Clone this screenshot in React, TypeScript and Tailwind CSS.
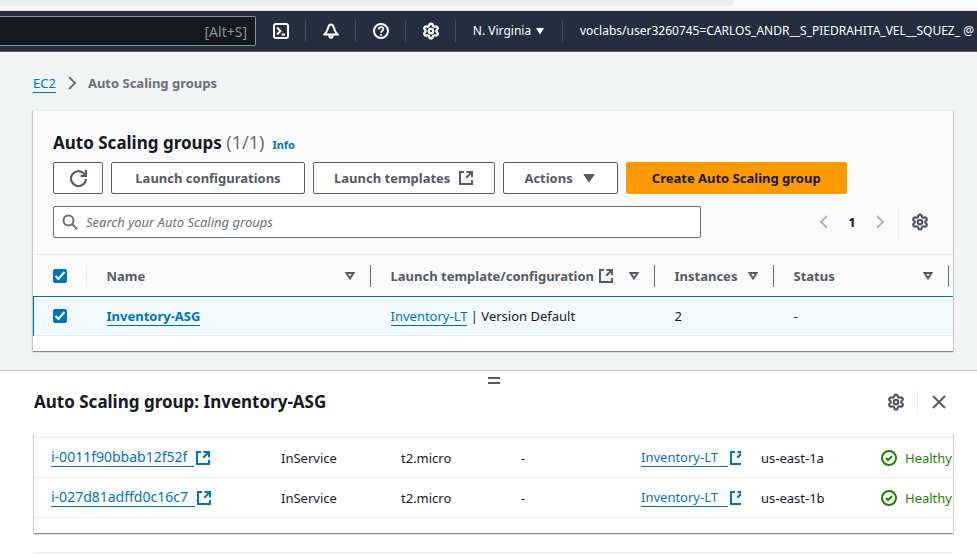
import type { ReactNode } from "react";
import { Settings } from "lucide-react";

function ExternalIcon() {
  return (
    <svg viewBox="0 0 16 16" className="inline-block size-4 shrink-0" fill="none" stroke="currentColor" strokeWidth="2" aria-hidden="true">
      <path d="M6 2H2v12h12v-4" />
      <path d="M8.5 2H14v5.2M14 2 8.2 7.8" />
    </svg>
  );
}

function CaretDown({ open = false }: { open?: boolean }) {
  return (
    <svg viewBox="0 0 16 16" className="size-4 shrink-0" fill={open ? "none" : "currentColor"} stroke="currentColor" strokeWidth="2" aria-hidden="true">
      {open ? <path d="M4.5 5h7L8 10.5z" /> : <path d="M4 5h8l-4 6z" />}
    </svg>
  );
}

function Angle({ left = false }: { left?: boolean }) {
  return (
    <svg viewBox="0 0 16 16" className="size-4" fill="none" stroke="currentColor" strokeWidth="2" aria-hidden="true">
      <path d={left ? "M11 2 5 8l6 6" : "M5 2l6 6-6 6"} />
    </svg>
  );
}

function CheckCircle() {
  return (
    <svg viewBox="0 0 16 16" className="size-4 shrink-0" fill="none" stroke="currentColor" strokeWidth="2" aria-hidden="true">
      <circle cx="8" cy="8" r="7" />
      <path d="m5 8 2 2 4-4" />
    </svg>
  );
}

function NavIcon({ label, children }: { label: string; children: ReactNode }) {
  return (
    <button type="button" aria-label={label} className="flex h-[22px] w-[50px] shrink-0 items-center justify-center border-r border-[#414d5c]">
      <svg viewBox="0 0 16 16" className="size-4" fill="none" stroke="currentColor" strokeWidth="2" aria-hidden="true">
        {children}
      </svg>
    </button>
  );
}

function Checkbox({ label }: { label: string }) {
  return (
    <span className="relative block size-[14px]">
      <input
        type="checkbox"
        defaultChecked
        aria-label={label}
        className="peer block size-[14px] appearance-none rounded-xs border border-[#687078] checked:border-[#0073bb] checked:bg-[#0073bb]"
      />
      <svg viewBox="0 0 14 14" className="pointer-events-none absolute inset-0 hidden size-[14px] peer-checked:block" fill="none" stroke="#fff" strokeWidth="2" aria-hidden="true">
        <path d="m2.5 7 3 3 6-7" />
      </svg>
    </span>
  );
}

const link = "border-b border-[#0073bb] text-[#0073bb]";
const panelShadow =
  "shadow-[0_1px_1px_0_rgba(0,28,36,0.3),1px_1px_1px_0_rgba(0,28,36,0.15),-1px_1px_1px_0_rgba(0,28,36,0.15)]";
const button =
  "flex h-8 items-center justify-center rounded-xs border border-[#545b64] bg-white px-5 font-bold whitespace-nowrap text-[#545b64]";

function HeaderCell({ label, external = false }: { label: string; external?: boolean }) {
  return (
    <th className="p-0 text-left font-bold">
      <div className="flex h-[22px] items-center justify-between border-r border-[#687078] pr-3 pl-5">
        <span className="flex items-center gap-1 whitespace-nowrap">
          {label}
          {external && <ExternalIcon />}
        </span>
        <CaretDown open />
      </div>
    </th>
  );
}

const instances = [
  { id: "i-0011f90bbab12f52f", zone: "us-east-1a" },
  { id: "i-027d81adffd0c16c7", zone: "us-east-1b" },
];

export default function App() {
  return (
    <div className="flex min-h-screen flex-col overflow-hidden bg-white font-['Noto_Sans','Open_Sans',sans-serif] text-[13px] leading-5 text-[#16191f]">
      <div className="h-[11px] border-b border-[#d9dcdd] bg-[#fbfbfb]">
        <div className="h-[6px] w-3/4 rounded-br-sm bg-[#ededed]" />
      </div>

      <header className="flex h-[41px] items-center overflow-hidden border-b border-[#545b64] bg-[#232f3e] text-xs text-white">
        <input
          type="text"
          aria-label="Search"
          placeholder="[Alt+S]"
          className="h-[30px] w-64 shrink-0 rounded-r-xs border border-l-0 border-[#879596] bg-[#16191f] px-2 text-right text-sm placeholder:text-[#879596]"
        />
        <NavIcon label="CloudShell">
          <rect x="1" y="1" width="14" height="14" rx="2" />
          <path d="m4 4.5 3.5 3.5L4 11.5M8.5 11.5H12" />
        </NavIcon>
        <NavIcon label="Notifications">
          <path d="M8 1.5C6.500 1.500 5.500 3 5 5c-.6 2.500-1.500 4.500-3.500 6.500h13C12.500 9.500 11.600 7.500 11 5c-.5-2-1.500-3.500-3-3.500z" />
          <path d="M6.300 12c0 3.700 3.400 3.700 3.400 0" />
        </NavIcon>
        <NavIcon label="Help">
          <circle cx="8" cy="8" r="7" />
          <path d="M5.700 6.500c0-3.200 4.700-3 4.700-.2C10.400 7.800 8 7.700 8 9.700M8 11v1.800" strokeWidth="1.700" />
        </NavIcon>
        <button type="button" aria-label="Settings" className="flex h-[22px] w-[50px] shrink-0 items-center justify-center border-r border-[#414d5c]">
          <Settings size={18} strokeWidth={3} />
        </button>
        <button type="button" className="flex h-[22px] w-[107px] shrink-0 items-center justify-center gap-1 border-r border-[#414d5c] whitespace-nowrap">
          N. Virginia
          <svg viewBox="0 0 10 10" className="size-[10px]" fill="currentColor" aria-hidden="true">
            <path d="M1 2h8L5 8.500z" />
          </svg>
        </button>
        <button type="button" className="shrink-0 px-[17px] whitespace-nowrap">
          voclabs/user3260745=CARLOS_ANDR__S_PIEDRAHITA_VEL__SQUEZ_ @
        </button>
      </header>

      <main className="border-b border-[#c1c7c7] bg-[#f2f3f3] pt-[21px] pr-6 pb-[19px] pl-[33px]">
        <nav aria-label="Breadcrumb" className="flex h-5 items-center gap-2">
          <a href="#ec2" className="leading-4 text-[#0073bb]">
            <span className={link}>EC2</span>
          </a>
          <span className="text-[#687078]">
            <Angle />
          </span>
          <span className="font-bold text-[#687078]">Auto Scaling groups</span>
        </nav>

        <section className={`mt-[17px] border-t border-[#eaeded] bg-white ${panelShadow}`}>
          <div className="bg-[#fafafa] px-5 pt-5 pb-4">
            <div className="flex h-[22px] items-baseline gap-2">
              <h1 className="text-[17px] leading-[22px] font-bold whitespace-nowrap">
                Auto Scaling groups <span className="text-lg leading-[22px] font-normal text-[#687078]">(1/1)</span>
              </h1>
              <a href="#info" className="text-[11px] leading-4 font-bold text-[#0073bb]">
                Info
              </a>
            </div>
            <div className="mt-[9px] flex flex-wrap gap-2">
              <button type="button" aria-label="Refresh" className="flex h-8 w-[50px] items-center justify-center rounded-xs border border-[#545b64] bg-white text-[#545b64]">
                <svg viewBox="0 0 16 16" className="size-[17px]" fill="none" stroke="currentColor" strokeWidth="2" aria-hidden="true">
                  <path d="M15 8.500A7 7 0 1 1 13 3.200l1.500 1.800" />
                  <path d="M15 0v5.500h-5" />
                </svg>
              </button>
              <button type="button" className={`${button} min-w-[194px]`}>Launch configurations</button>
              <button type="button" className={`${button} gap-2`}>
                Launch templates
                <ExternalIcon />
              </button>
              <button type="button" className={`${button} gap-2`}>
                Actions
                <CaretDown />
              </button>
              <button type="button" className="h-8 min-w-[221px] rounded-xs border border-[#ff9900] bg-[#ff9900] px-5 font-bold whitespace-nowrap">
                Create Auto Scaling group
              </button>
            </div>
            <div className="mt-3 flex items-center justify-between pr-1">
              <div className="flex h-8 w-[648px] items-center rounded-xs border border-[#687078] bg-white px-2 text-[#687078]">
                <svg viewBox="0 0 16 16" className="size-4 shrink-0" fill="none" stroke="currentColor" strokeWidth="2" aria-hidden="true">
                  <circle cx="6.500" cy="6.500" r="5" />
                  <path d="m10 10 5 5" />
                </svg>
                <input
                  type="search"
                  aria-label="Search your Auto Scaling groups"
                  placeholder="Search your Auto Scaling groups"
                  className="ml-2 min-w-0 flex-1 placeholder:text-[#687078] placeholder:italic"
                />
              </div>
              <div className="flex items-center">
                <button type="button" aria-label="Previous page" className="text-[#aab7b8]"><Angle left /></button>
                <button type="button" className="w-10 text-center font-bold">1</button>
                <button type="button" aria-label="Next page" className="text-[#aab7b8]"><Angle /></button>
                <button type="button" aria-label="Preferences" className="ml-[10px] flex h-8 items-center border-l border-[#eaeded] pl-3 text-[#545b64]">
                  <Settings size={18} strokeWidth={3} />
                </button>
              </div>
            </div>
          </div>

          <div className="overflow-hidden pb-[15px]">
            <table className="w-full table-fixed border-collapse">
              <colgroup>
                <col className="w-[53px]" />
                <col className="w-[284px]" />
                <col className="w-[284px]" />
                <col className="w-[119px]" />
                <col className="w-[175px]" />
                <col />
              </colgroup>
              <thead>
                <tr className="h-[42px] border-t border-[#eaeded] bg-[#fafafa] text-[#545b64]">
                  <th className="p-0">
                    <div className="flex h-[22px] items-center border-r border-[#eaeded] pl-[19px]">
                      <Checkbox label="Select all" />
                    </div>
                  </th>
                  <HeaderCell label="Name" />
                  <HeaderCell label="Launch template/configuration" external />
                  <HeaderCell label="Instances" />
                  <HeaderCell label="Status" />
                  <td />
                </tr>
              </thead>
              <tbody>
                <tr className="h-[39px] border-t border-b border-t-[#0073bb] border-b-[#e3eaee] bg-[#f1faff]">
                  <td className="border-l border-[#0073bb] p-0 pl-[19px]">
                    <Checkbox label="Select Inventory-ASG" />
                  </td>
                  <td className="p-0 pl-5 font-bold">
                    <a href="#asg" className={link}>Inventory-ASG</a>
                  </td>
                  <td className="p-0 pl-5">
                    <a href="#lt" className={link}>Inventory-LT</a> | Version Default
                  </td>
                  <td className="p-0 pl-5">2</td>
                  <td className="p-0 pl-5">-</td>
                  <td />
                </tr>
              </tbody>
            </table>
          </div>
        </section>
      </main>

      <section className="flex-1 px-6 pl-[34px]">
        <div className="flex h-[19px] justify-center pt-1.5">
          <button type="button" aria-label="Resize panel" className="h-[7px] w-3 border-y-2 border-[#545b64]" />
        </div>
        <div className="flex h-6 items-center justify-between">
          <h2 className="text-[17px] leading-6 font-bold">Auto Scaling group: Inventory-ASG</h2>
          <div className="flex items-center text-[#545b64]">
            <button type="button" aria-label="Panel preferences" className="flex h-6 items-center border-r border-[#eaeded] pr-3">
              <Settings size={18} strokeWidth={3} />
            </button>
            <button type="button" aria-label="Close panel" className="px-[13px] pr-1.5">
              <svg viewBox="0 0 16 16" className="size-4" fill="none" stroke="currentColor" strokeWidth="2" aria-hidden="true">
                <path d="m2 2 12 12M14 2 2 14" />
              </svg>
            </button>
          </div>
        </div>

        <div className={`mt-[19px] overflow-hidden border-t-4 border-[#fafafa] pb-[15px] ${panelShadow}`}>
          <table className="w-full table-fixed border-collapse">
            <colgroup>
              <col className="w-[227px]" />
              <col className="w-[120px]" />
              <col className="w-[120px]" />
              <col className="w-[120px]" />
              <col className="w-[120px]" />
              <col className="w-[120px]" />
              <col />
            </colgroup>
            <tbody className="whitespace-nowrap">
              {instances.map((row) => (
                <tr key={row.id} className="h-10 border-y border-[#eaeded]">
                  <td className="p-0 pl-[17px]">
                    <a href="#instance" className="flex items-center gap-px text-[#0073bb]">
                      <span className="border-b border-[#0073bb] pr-[7px] text-sm leading-[18px]">{row.id}</span>
                      <ExternalIcon />
                    </a>
                  </td>
                  <td className="p-0 pl-5">InService</td>
                  <td className="p-0 pl-5">t2.micro</td>
                  <td className="p-0 pl-5">-</td>
                  <td className="p-0 pl-5">
                    <a href="#template" className="flex items-center gap-px overflow-hidden text-[#0073bb]">
                      <span className="shrink-0 border-b border-[#0073bb] pr-[10px] leading-[18px]">Inventory-LT</span>
                      <ExternalIcon />
                    </a>
                  </td>
                  <td className="p-0 pl-5">{row.zone}</td>
                  <td className="overflow-hidden p-0 pl-5">
                    <span className="flex items-center gap-2 text-[#1d8102]">
                      <CheckCircle />
                      Healthy
                    </span>
                  </td>
                </tr>
              ))}
            </tbody>
          </table>
        </div>
        <div className="mt-[19px] border-t border-[#eaeded]" />
      </section>
    </div>
  );
}
